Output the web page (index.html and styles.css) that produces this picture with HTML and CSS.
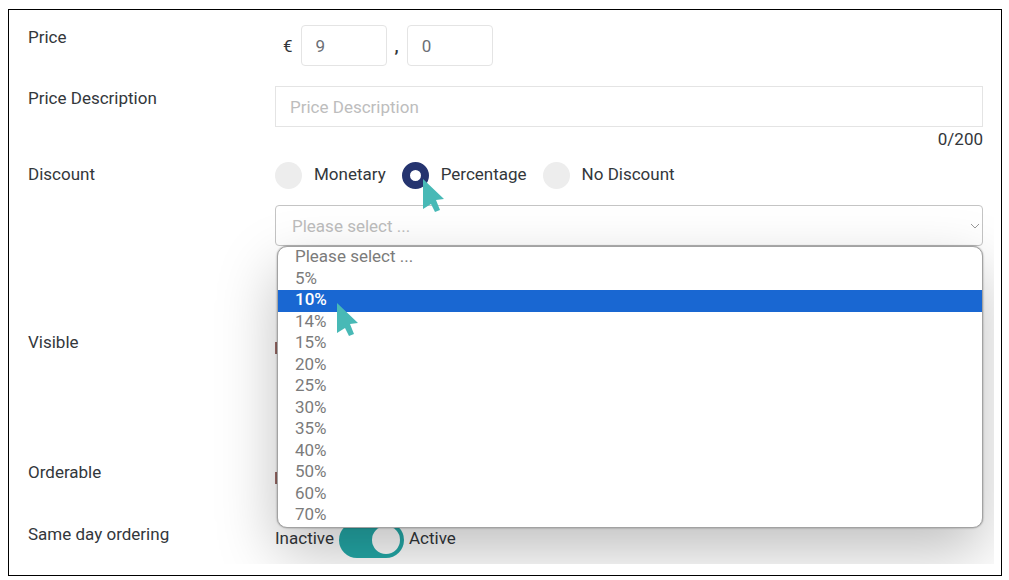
FILE: index.html
```html
<!DOCTYPE html>
<html lang="en">
<head>
<meta charset="UTF-8">
<meta name="viewport" content="width=device-width, initial-scale=1.0">
<title>Price and discount</title>
<link rel="stylesheet" href="styles.css">
</head>
<body>
<div class="frame">
  <form class="form">
    <div class="row row-price">
      <label class="row-label" for="price">Price</label>
      <div class="price">
        <span>€</span>
        <input type="text" class="input price-input" id="price" value="9">
        <span class="comma">,</span>
        <input type="text" class="input price-input" aria-label="Cents" value="0">
      </div>
    </div>

    <div class="row row-description">
      <label class="row-label" for="description">Price Description</label>
      <div>
        <input type="text" class="input description-input" id="description" placeholder="Price Description">
        <div class="counter">0/200</div>
      </div>
    </div>

    <div class="row row-discount">
      <span class="row-label" id="discount-label">Discount</span>
      <div>
        <div class="radios" role="radiogroup" aria-labelledby="discount-label">
          <label class="radio"><input type="radio" name="discount">Monetary</label>
          <label class="radio"><input type="radio" name="discount" checked>Percentage
            <svg class="pointer pointer-radio" viewBox="0 0 22 34"><path d="M0 0L21 20L13 21L17 31L12 33L8 25L0 30Z"/></svg>
          </label>
          <label class="radio"><input type="radio" name="discount">No Discount</label>
        </div>
        <div class="dropdown">
          <select class="select" aria-label="Percentage">
            <option>Please select ...</option>
          </select>
          <svg class="chevron" viewBox="0 0 10 6"><path d="M1 1L5 5L9 1"/></svg>
          <ul class="menu" role="listbox" aria-label="Percentage options">
            <li role="option">Please select ...</li>
            <li role="option">5%</li>
            <li role="option" class="active" aria-selected="true">10%
              <svg class="pointer pointer-option" viewBox="0 0 22 34"><path d="M0 0L21 20L13 21L17 31L12 33L8 25L0 30Z"/></svg>
            </li>
            <li role="option">14%</li>
            <li role="option">15%</li>
            <li role="option">20%</li>
            <li role="option">25%</li>
            <li role="option">30%</li>
            <li role="option">35%</li>
            <li role="option">40%</li>
            <li role="option">50%</li>
            <li role="option">60%</li>
            <li role="option">70%</li>
          </ul>
        </div>
      </div>
    </div>

    <div class="row row-visible">
      <label class="row-label" for="visible">Visible</label>
      <div class="check"><input type="checkbox" id="visible"></div>
    </div>

    <div class="row row-orderable">
      <label class="row-label" for="orderable">Orderable</label>
      <div class="check"><input type="checkbox" id="orderable"></div>
    </div>

    <div class="row">
      <label class="row-label" for="same-day">Same day ordering</label>
      <div class="switch">
        <span>Inactive</span>
        <input type="checkbox" class="toggle" id="same-day" checked>
        <span>Active</span>
      </div>
    </div>
  </form>
</div>
</body>
</html>
```
FILE: styles.css
```css
* {
  box-sizing: border-box;
}
body {
  margin: 9px 7px 4px 8px;
  background-color: #fff;
  color: #33373b;
  font-family: Roboto, sans-serif;
  font-size: 17px;
  line-height: 24px;
}
.frame {
  border: 1px solid #000;
  padding: 0 7px 11px 0;
}
.form {
  overflow: hidden;
  padding: 15px 11px 6px 19px;
}
.row {
  display: grid;
  grid-template-columns: 247px 1fr;
  align-items: start;
}
.row-price {
  margin-bottom: 20px;
}
.row-description {
  margin-bottom: 11px;
}
.row-discount {
  margin-bottom: 84px;
}
.row-visible {
  margin-bottom: 106px;
}
.row-orderable {
  margin-bottom: 38px;
}
input,
select {
  margin: 0;
  font: inherit;
}
.input {
  height: 41px;
  padding: 0 14px;
  border: 1px solid #e4e4e4;
  background-color: #fff;
  color: #6c6f75;
  outline: none;
}
.price {
  display: flex;
  align-items: center;
  gap: 8px;
  padding-left: 8px;
}
.price-input {
  width: 86px;
  border-radius: 4px;
}
.comma {
  font-weight: 700;
}
.description-input {
  display: block;
  width: 100%;
}
.description-input::placeholder {
  color: #bdbdbd;
  opacity: 1;
}
.counter {
  text-align: right;
}
.radios {
  display: flex;
  gap: 16px;
  margin-bottom: 16px;
}
.radio {
  position: relative;
  display: flex;
  gap: 12px;
  height: 27px;
}
.radio input {
  appearance: none;
  width: 27px;
  height: 27px;
  border-radius: 50%;
  background-color: #ededed;
}
.radio input:checked {
  border: 8px solid #25346f;
  background-color: #fff;
}
.dropdown {
  position: relative;
}
.select {
  display: block;
  appearance: none;
  width: 100%;
  height: 41px;
  padding: 0 16px;
  border: 1px solid #c4c4c4;
  border-radius: 4px;
  background-color: #fff;
  color: #bdbdbd;
}
.chevron {
  position: absolute;
  top: 18px;
  right: 3px;
  width: 10px;
  height: 6px;
  fill: none;
  stroke: #999;
}
.menu {
  position: absolute;
  z-index: 1;
  top: 100%;
  left: 2px;
  right: 0;
  display: flex;
  flex-direction: column;
  height: 282px;
  margin: 0;
  padding: 0;
  border: 1px solid #a2a2a2;
  border-radius: 10px;
  background-color: #fff;
  box-shadow: 0 0 2px rgba(0,0,0,0.4), 0 24px 60px rgba(0,0,0,0.25);
  color: #7b7b7b;
  line-height: 19px;
  list-style: none;
}
.menu li {
  flex: 1;
  padding-left: 17px;
}
.menu .active {
  position: relative;
  background-color: #1967d2;
  color: #fff;
  font-weight: 500;
}
.pointer {
  position: absolute;
  z-index: 2;
  width: 22px;
  height: 34px;
  fill: #48b9b6;
}
.pointer-radio {
  top: 17px;
  left: 21px;
}
.pointer-option {
  top: 13px;
  left: 59px;
}
.check {
  display: flex;
  align-items: flex-end;
  height: 24px;
}
.check input {
  appearance: none;
  width: 12px;
  height: 12px;
  background-color: #9a6a66;
}
.switch {
  display: flex;
  gap: 5px;
  height: 36px;
  line-height: 32px;
}
.toggle {
  appearance: none;
  display: flex;
  justify-content: flex-end;
  align-items: center;
  width: 65px;
  height: 36px;
  padding: 4px;
  border-radius: 18px;
  background-color: #24a9a8;
}
.toggle::before {
  content: "";
  width: 28px;
  height: 28px;
  border-radius: 50%;
  background-color: #fff;
}
```
